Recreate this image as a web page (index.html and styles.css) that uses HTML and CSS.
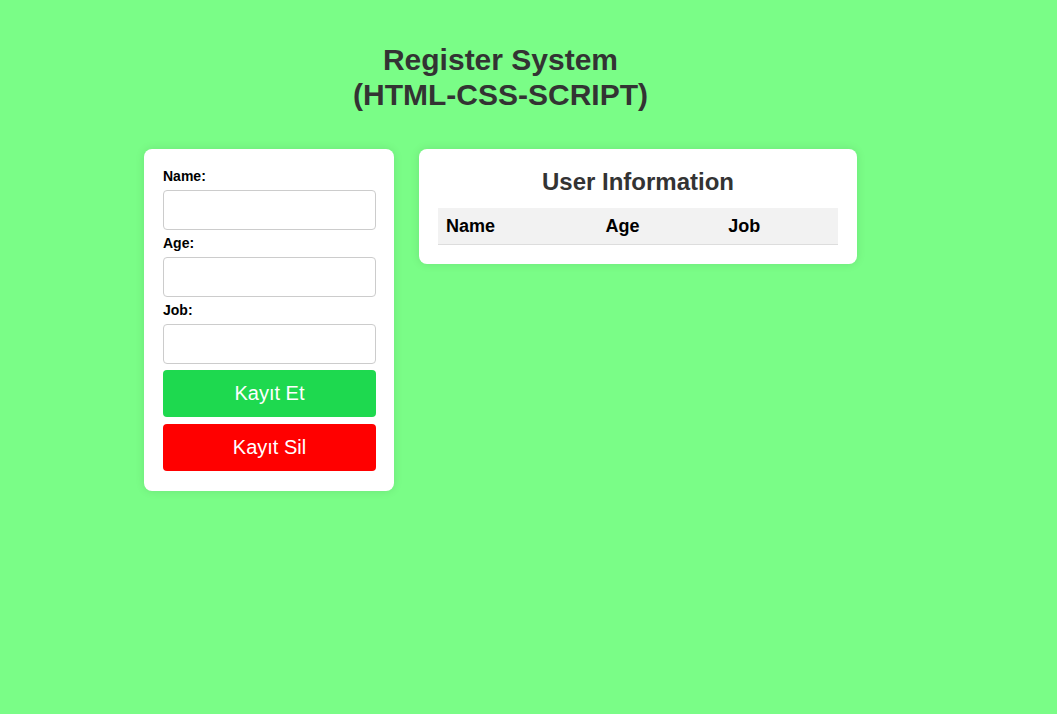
FILE: index.html
```html
<!DOCTYPE html>
<html lang="en">
<head>
<meta charset="UTF-8">
<title>Register System</title>
<link rel="stylesheet" href="styles.css">
</head>
<body>
<div class="page">
  <h1 class="title">Register System<br>(HTML-CSS-SCRIPT)</h1>
  <div class="row">
    <form class="card form-card">
      <label class="lbl" for="name">Name:</label>
      <input class="field" id="name" type="text">
      <label class="lbl" for="age">Age:</label>
      <input class="field" id="age" type="text">
      <label class="lbl" for="job">Job:</label>
      <input class="field" id="job" type="text">
      <button type="button" class="btn btn-save">Kayıt Et</button>
      <button type="button" class="btn btn-delete">Kayıt Sil</button>
    </form>
    <div class="card table-card">
      <h2 class="table-title">User Information</h2>
      <table class="users">
        <thead>
          <tr><th>Name</th><th>Age</th><th>Job</th></tr>
        </thead>
        <tbody></tbody>
      </table>
    </div>
  </div>
</div>
</body>
</html>
```
FILE: styles.css
```css
html, body {
  margin: 0;
  padding: 0;
}
body {
  background: #7afd87;
  font-family: "Liberation Sans", Arial, sans-serif;
  min-height: 714px;
}
.page {
  width: 713px;
  margin-left: 144px;
  padding-top: 43px;
}
.title {
  margin: 0 0 37px;
  text-align: center;
  font-size: 30px;
  line-height: 34.5px;
  font-weight: bold;
  color: #333;
}
.row {
  display: flex;
  align-items: flex-start;
  gap: 25px;
}
.card {
  background: #fff;
  border-radius: 8px;
  box-shadow: 0 0 10px rgba(0, 0, 0, 0.1);
  box-sizing: border-box;
}
.form-card {
  width: 250px;
  padding: 19px 18px 20px 19px;
  margin: 0;
}
.lbl {
  display: block;
  font-size: 14px;
  line-height: 16px;
  font-weight: bold;
  color: #000;
  margin-bottom: 6px;
}
.field {
  display: block;
  width: 100%;
  height: 40px;
  box-sizing: border-box;
  border: 1px solid #ccc;
  border-radius: 4px;
  margin: 0 0 5px;
  padding: 8px;
  font-size: 14px;
  background: #fff;
}
.btn {
  display: block;
  width: 100%;
  height: 47px;
  border: none;
  border-radius: 4px;
  color: #fff;
  font-family: "Liberation Sans", Arial, sans-serif;
  font-size: 20px;
  cursor: pointer;
}
.btn-save {
  background: #1ed94f;
  margin: 6px 0 7px;
}
.btn-delete {
  background: #ff0000;
  margin: 0;
}
.table-card {
  width: 438px;
  padding: 19px 19px 19px;
}
.table-title {
  margin: 0 0 12px;
  text-align: center;
  font-size: 24px;
  line-height: 27.6px;
  color: #333;
}
.users {
  width: 100%;
  border-collapse: collapse;
}
.users th {
  background: #f2f2f2;
  text-align: left;
  font-size: 18px;
  line-height: 20px;
  font-weight: bold;
  color: #000;
  padding: 8px;
  border-bottom: 1px solid #ddd;
}
```
